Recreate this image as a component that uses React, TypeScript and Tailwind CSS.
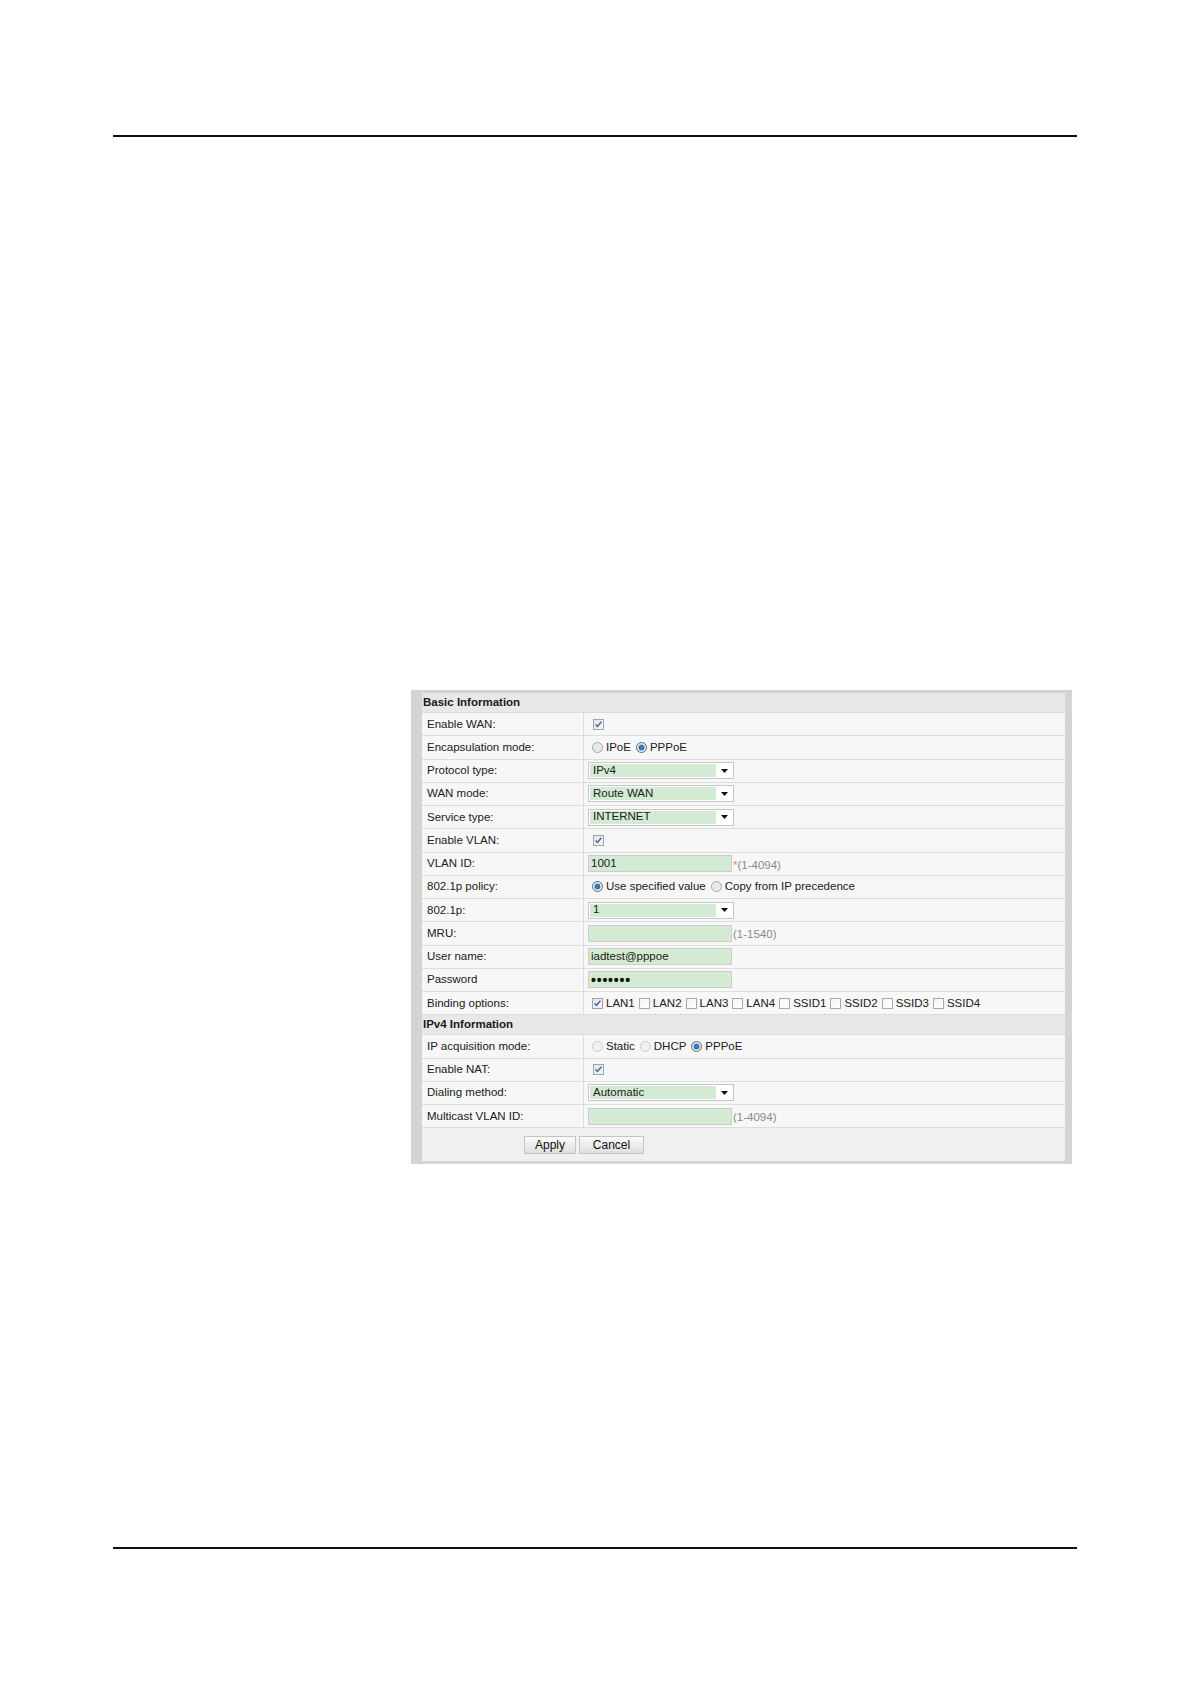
import React from "react";

const Check = ({ checked = false }: { checked?: boolean }) => (
  <svg width="11" height="11" viewBox="0 0 11 11" className="shrink-0">
    <defs>
      <linearGradient id={checked ? "cbOn" : "cbOff"} x1="0" y1="0" x2="1" y2="1">
        <stop offset="0" stopColor={checked ? "#dfe4ea" : "#f4f4f4"} />
        <stop offset="1" stopColor={checked ? "#f5f7f9" : "#ffffff"} />
      </linearGradient>
    </defs>
    <rect x="0.5" y="0.5" width="10" height="10" fill={`url(#${checked ? "cbOn" : "cbOff"})`} stroke={checked ? "#9aa6b4" : "#a9a9a9"} />
    {checked && <path d="M2.6 5.4 L4.4 7.4 L8.4 2.8" fill="none" stroke="#4d5d8c" strokeWidth="1.4" />}
  </svg>
);

const Radio = ({ checked = false, faded = false }: { checked?: boolean; faded?: boolean }) => (
  <svg width="11" height="11" viewBox="0 0 11 11" className="shrink-0">
    <circle cx="5.5" cy="5.5" r="5" fill={faded ? "#f0f0f0" : "#e9e9e9"} stroke={faded ? "#cfcfcf" : checked ? "#5a6b7c" : "#a5a5a5"} />
    {checked && <circle cx="5.5" cy="5.5" r="2.6" fill="#2f7fd0" stroke="#1d4f86" strokeWidth="0.6" />}
  </svg>
);

const Select = ({ value }: { value: string }) => (
  <div className="w-[146px] h-[17px] border border-[#c8c8c8] bg-white flex p-[1px]">
    <div className="w-[126px] bg-[#d3ebd3] pl-[3px] flex items-center leading-none">{value}</div>
    <div className="flex-1 flex items-center justify-center">
      <svg width="7" height="4" viewBox="0 0 7 4">
        <path d="M0 0 H7 L3.5 4 Z" fill="#111" />
      </svg>
    </div>
  </div>
);

const TextInput = ({ value = "", password = false }: { value?: string; password?: boolean }) => (
  <div className="w-[144px] h-[17px] border border-[#cdcdcd] bg-[#d3ebd3] pl-[2px] flex items-center leading-none">
    {password ? <span className="font-bold text-[14px] tracking-[0.8px] text-[#111]">{"•".repeat(value.length)}</span> : value}
  </div>
);

const Hint = ({ text, star = false }: { text: string; star?: boolean }) => (
  <span className="ml-[1px] mt-[3px] text-[#8a8a8a]">
    {star && <span className="text-[#e08080]">*</span>}
    {text}
  </span>
);

const Row = ({ label, children }: { label: string; children?: React.ReactNode }) => (
  <div className="flex h-[23.25px] border-b border-[#dddddd] bg-[#f7f7f7]">
    <div className="w-[162px] shrink-0 border-r border-[#dddddd] pl-[5px] flex items-center">{label}</div>
    <div className="flex-1 flex items-center pl-[4px]">{children}</div>
  </div>
);

const Header = ({ title }: { title: string }) => (
  <div className="h-[20px] bg-[#e8e8e8] border-b border-[#dddddd] pl-[1px] flex items-center font-bold text-[#1a1a1a]">
    {title}
  </div>
);

const Opt = ({ children }: { children: React.ReactNode }) => <span className="ml-[3px] mr-[5px]">{children}</span>;

export default function App() {
  const binds = ["LAN1", "LAN2", "LAN3", "LAN4", "SSID1", "SSID2", "SSID3", "SSID4"];
  return (
    <div className="w-[1191px] h-[1684px] bg-white font-['Liberation_Sans',Arial,sans-serif] text-[11.5px] text-[#202020]">
      <div className="pt-[135px] pl-[113px]">
        <div className="w-[964px] h-[1.5px] bg-[#111]" />
      </div>

      <div className="mt-[553.5px] ml-[411px] w-[661px] border-l-[11px] border-t-[3px] border-r-[7px] border-b-[3px] border-[#d4d4d4]">
        <Header title="Basic Information" />
        <Row label="Enable WAN:">
          <span className="ml-[5px]"><Check checked /></span>
        </Row>
        <Row label="Encapsulation mode:">
          <span className="ml-[4px] flex items-center">
            <Radio />
            <Opt>IPoE</Opt>
            <Radio checked />
            <Opt>PPPoE</Opt>
          </span>
        </Row>
        <Row label="Protocol type:">
          <Select value="IPv4" />
        </Row>
        <Row label="WAN mode:">
          <Select value="Route WAN" />
        </Row>
        <Row label="Service type:">
          <Select value="INTERNET" />
        </Row>
        <Row label="Enable VLAN:">
          <span className="ml-[5px]"><Check checked /></span>
        </Row>
        <Row label="VLAN ID:">
          <TextInput value="1001" />
          <Hint text="(1-4094)" star />
        </Row>
        <Row label="802.1p policy:">
          <span className="ml-[4px] flex items-center">
            <Radio checked />
            <Opt>Use specified value</Opt>
            <Radio />
            <Opt>Copy from IP precedence</Opt>
          </span>
        </Row>
        <Row label="802.1p:">
          <Select value="1" />
        </Row>
        <Row label="MRU:">
          <TextInput />
          <Hint text="(1-1540)" />
        </Row>
        <Row label="User name:">
          <TextInput value="iadtest@pppoe" />
        </Row>
        <Row label="Password">
          <TextInput value="1234567" password />
        </Row>
        <Row label="Binding options:">
          <span className="ml-[4px] flex items-center">
            {binds.map((b, i) => (
              <React.Fragment key={b}>
                <Check checked={i === 0} />
                <span className="ml-[3px] mr-[4px]">{b}</span>
              </React.Fragment>
            ))}
          </span>
        </Row>

        <Header title="IPv4 Information" />
        <Row label="IP acquisition mode:">
          <span className="ml-[4px] flex items-center">
            <Radio faded />
            <Opt>Static</Opt>
            <Radio faded />
            <Opt>DHCP</Opt>
            <Radio checked />
            <Opt>PPPoE</Opt>
          </span>
        </Row>
        <Row label="Enable NAT:">
          <span className="ml-[5px]"><Check checked /></span>
        </Row>
        <Row label="Dialing method:">
          <Select value="Automatic" />
        </Row>
        <Row label="Multicast VLAN ID:">
          <TextInput />
          <Hint text="(1-4094)" />
        </Row>

        <div className="h-[33px] bg-[#f0f0f0] flex items-center pl-[102px] gap-[3px]">
          <button className="w-[52px] h-[18px] border border-[#c4c4c4] bg-gradient-to-b from-[#fbfbfb] to-[#dedede] text-[12px] text-[#111] leading-none">
            Apply
          </button>
          <button className="w-[65px] h-[18px] border border-[#c4c4c4] bg-gradient-to-b from-[#fbfbfb] to-[#dedede] text-[12px] text-[#111] leading-none">
            Cancel
          </button>
        </div>
      </div>

      <div className="mt-[383px] ml-[113px] w-[964px] h-[1.5px] bg-[#111]" />
    </div>
  );
}
